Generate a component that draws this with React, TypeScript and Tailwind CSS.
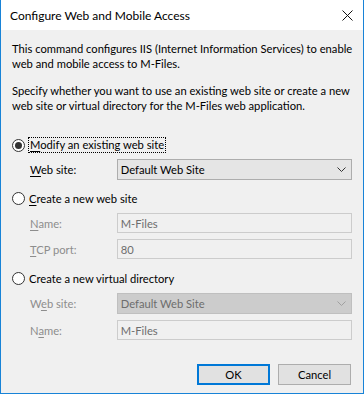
import React from "react";

const FONT = "font-['Lato',_'Noto_Sans',_sans-serif]";

function Radio({ checked }: { checked?: boolean }) {
  return (
    <span className="flex h-[13px] w-[13px] shrink-0 items-center justify-center rounded-full border border-[#333] bg-white">
      {checked && <span className="h-[7px] w-[7px] rounded-full bg-[#333]" />}
    </span>
  );
}

function Chevron({ disabled }: { disabled?: boolean }) {
  return (
    <svg width="9" height="5" viewBox="0 0 9 5" className="mr-[5px]">
      <path
        d="M0.5 0.5 L4.5 4.5 L8.5 0.5"
        fill="none"
        stroke={disabled ? "#a0a0a0" : "#333"}
        strokeWidth="1"
      />
    </svg>
  );
}

function Key({ children }: { children: React.ReactNode }) {
  return <span className="underline decoration-1 underline-offset-2">{children}</span>;
}

function Field({
  label,
  children,
  disabled,
  mt,
}: {
  label: React.ReactNode;
  children: React.ReactNode;
  disabled?: boolean;
  mt: string;
}) {
  return (
    <div className={`flex items-center ${mt}`}>
      <div className={`ml-[18px] w-[87px] ${disabled ? "text-[#8d8d8d]" : "text-black"}`}>{label}</div>
      {children}
    </div>
  );
}

export default function App() {
  return (
    <div className={`flex h-[394px] w-[364px] flex-col border-x border-b border-[#1883d7] text-[11.2px] leading-[15px] text-black ${FONT}`}>
      <div className="flex h-[30px] shrink-0 items-center justify-between bg-white pl-[9px] pr-[10px]">
        <span className="text-[12px]">Configure Web and Mobile Access</span>
        <svg width="11" height="11" viewBox="0 0 11 11">
          <path d="M0.5 0.5 L10.5 10.5 M10.5 0.5 L0.5 10.5" stroke="#111" strokeWidth="1" />
        </svg>
      </div>

      <div className="flex flex-1 flex-col bg-[#f0f0f0] pl-[11px] pr-[11px] pt-[11px]">
        <p className="whitespace-nowrap">
          This command configures IIS (Internet Information Services) to enable
          <br />
          web and mobile access to M-Files.
        </p>
        <p className="mt-[12px] whitespace-nowrap">
          Specify whether you want to use an existing web site or create a new
          <br />
          web site or virtual directory for the M-Files web application.
        </p>

        <div className="mt-[24px] flex h-[16px] items-center">
          <Radio checked />
          <span className="ml-[3px] border border-dotted border-black px-[1px] leading-[14px]">
            <Key>M</Key>odify an existing web site
          </span>
        </div>
        <Field mt="mt-[6px]" label={<><Key>W</Key>eb site:</>}>
          <div className="flex h-[21px] w-[236px] items-center justify-between border border-[#adadad] bg-[#e5e5e5] pl-[3px]">
            <span>Default Web Site</span>
            <Chevron />
          </div>
        </Field>

        <div className="mt-[10px] flex h-[16px] items-center">
          <Radio />
          <span className="ml-[4px]">
            <Key>C</Key>reate a new web site
          </span>
        </div>
        <Field mt="mt-[7px]" disabled label={<><Key>N</Key>ame:</>}>
          <div className="flex h-[20px] w-[236px] items-center border border-[#cccccc] bg-[#f0f0f0] pl-[3px] text-[#6d6d6d]">
            M-Files
          </div>
        </Field>
        <Field mt="mt-[6px]" disabled label={<><Key>T</Key>CP port:</>}>
          <div className="flex h-[20px] w-[236px] items-center border border-[#cccccc] bg-[#f0f0f0] pl-[3px] text-[#6d6d6d]">
            80
          </div>
        </Field>

        <div className="mt-[11px] flex h-[16px] items-center">
          <Radio />
          <span className="ml-[4px]">Create a new virtual directory</span>
        </div>
        <Field mt="mt-[7px]" disabled label={<>W<Key>e</Key>b site:</>}>
          <div className="flex h-[21px] w-[236px] items-center justify-between border border-[#bfbfbf] bg-[#cccccc] pl-[3px] text-[#6d6d6d]">
            <span>Default Web Site</span>
            <Chevron disabled />
          </div>
        </Field>
        <Field mt="mt-[6px]" disabled label={<>N<Key>a</Key>me:</>}>
          <div className="flex h-[20px] w-[236px] items-center border border-[#cccccc] bg-[#f0f0f0] pl-[3px] text-[#6d6d6d]">
            M-Files
          </div>
        </Field>

        <div className="mt-[24px] flex justify-end gap-[8px] pr-[1px]">
          <button className="flex h-[21px] w-[73px] items-center justify-center border-2 border-[#0078d7] bg-[#e1e1e1]">
            OK
          </button>
          <button className="flex h-[21px] w-[73px] items-center justify-center border border-[#adadad] bg-[#e1e1e1]">
            Cancel
          </button>
        </div>
      </div>
    </div>
  );
}
